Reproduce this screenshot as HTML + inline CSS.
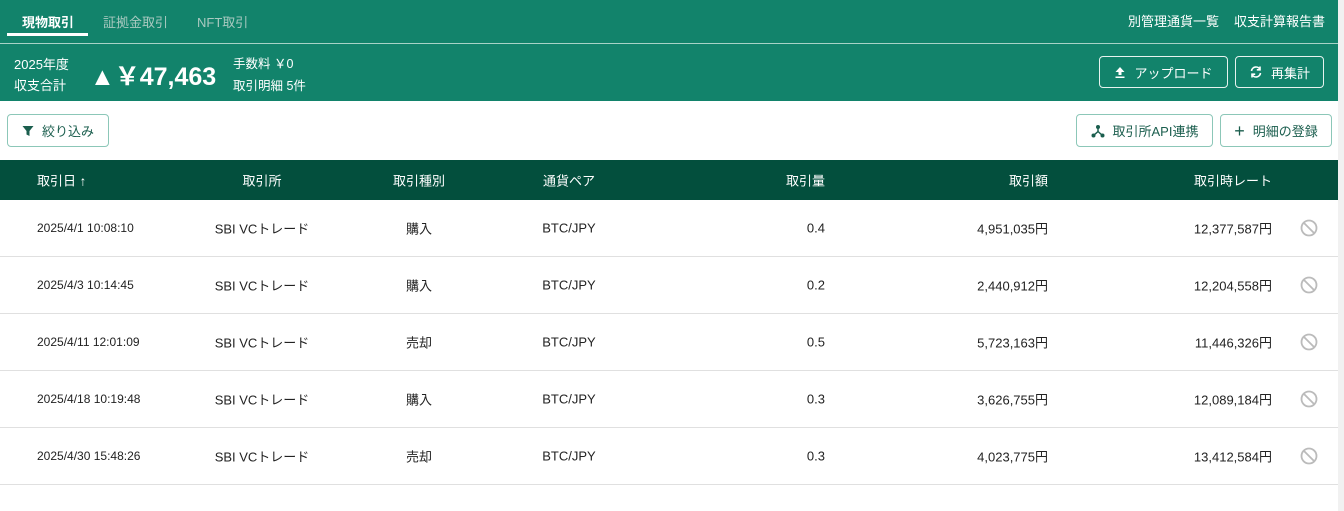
<!DOCTYPE html>
<html><head><meta charset="utf-8"><style>
*{box-sizing:border-box;margin:0;padding:0}
body{width:1344px;height:511px;overflow:hidden;background:#fff;font-family:"Liberation Sans","Noto Sans CJK JP",sans-serif;position:relative;color:#222}
.g{position:absolute;left:0;top:0;width:1338px;height:101px;background:#12836b}
.sb{position:absolute;left:1338px;top:0;width:6px;height:511px;background:#f1f1f1}
.tab{position:absolute;top:12px;font-size:13px;color:#a9c9c0}
.line{position:absolute;left:0;top:43px;width:1338px;height:1px;background:#a8d3c7}
.w{color:#fff;position:absolute}
.btn{position:absolute;border:1px solid #e7f3ef;border-radius:4px;color:#fff;font-size:13px;display:flex;align-items:center;justify-content:center;gap:8px}
.ob{position:absolute;border:1px solid #8cc7b8;border-radius:4px;color:#1b5e4e;font-size:13px;display:flex;align-items:center;justify-content:center;gap:8px}
.hd{position:absolute;left:0;top:160px;width:1338px;height:40px;background:#034f3d;color:#fff;font-size:13px}
.hd span,.r span{position:absolute;top:50%;transform:translateY(-50%);white-space:nowrap}
.r{position:absolute;left:0;width:1338px;height:57px;border-bottom:1px solid #e0e0e0;font-size:13px;color:#222}
.c{transform:translate(-50%,-50%)!important}
svg{display:block}
</style></head><body>
<div class="g"></div><div class="sb"></div>
<div class="tab" style="left:22px;color:#fff;font-weight:bold">現物取引</div>
<div style="position:absolute;left:7px;top:33px;width:81px;height:3px;background:#fff"></div>
<div class="tab" style="left:103px">証拠金取引</div>
<div class="tab" style="left:197px">NFT取引</div>
<div class="w" style="left:1128px;top:11px;font-size:13px">別管理通貨一覧</div>
<div class="w" style="left:1234px;top:11px;font-size:13px">収支計算報告書</div>
<div class="line"></div>
<div class="w" style="left:14px;top:54px;font-size:13px;line-height:21px">2025年度<br>収支合計</div>
<div class="w" style="left:90px;top:57px;font-size:25px;font-weight:bold">▲￥47,463</div>
<div class="w" style="left:233px;top:53px;font-size:12.5px;line-height:22px">手数料 ￥0<br>取引明細 5件</div>
<div class="btn" style="left:1099px;top:56px;width:129px;height:32px"><svg width="12" height="12" viewBox="0 0 12 12"><path d="M6 1L1.5 6H4.5V9H7.5V6H10.5Z M1.5 10.5H10.5V12H1.5Z" fill="#fff"/></svg>アップロード</div>
<div class="btn" style="left:1235px;top:56px;width:89px;height:32px"><svg width="14" height="14" viewBox="0 0 14 14" fill="none" stroke="#fff" stroke-width="1.6"><path d="M2.5 6A4.5 4.5 0 0 1 11 4.5M11.5 8A4.5 4.5 0 0 1 3 9.5"/><path d="M11 1.5V4.8H7.8M3 12.5V9.2H6.2"/></svg>再集計</div>
<div class="ob" style="left:7px;top:114px;width:102px;height:33px"><svg width="12" height="12" viewBox="0 0 12 12"><path d="M0.5 1H11.5L7.5 6V11L4.5 9.5V6Z" fill="#1b5e4e"/></svg>絞り込み</div>
<div class="ob" style="left:1076px;top:114px;width:137px;height:33px"><svg width="14" height="14" viewBox="0 0 14 14"><circle cx="7" cy="3" r="2" fill="#1b5e4e"/><circle cx="2.5" cy="11.5" r="2" fill="#1b5e4e"/><circle cx="11.5" cy="11.5" r="2" fill="#1b5e4e"/><path d="M7 3V7.5L2.5 11.5M7 7.5L11.5 11.5" stroke="#1b5e4e" stroke-width="1.5" fill="none"/></svg>取引所API連携</div>
<div class="ob" style="left:1220px;top:114px;width:112px;height:33px"><span style="font-size:18px;line-height:1">+</span>明細の登録</div>
<div class="hd">
<span style="left:37px">取引日 ↑</span><span class="c" style="left:262px">取引所</span><span class="c" style="left:419px">取引種別</span><span class="c" style="left:569px">通貨ペア</span>
<span style="right:513px">取引量</span><span style="right:290px">取引額</span><span style="right:66px">取引時レート</span></div>
<div id="rows"></div>
<script>
var d=[["2025/4/1 10:08:10","購入","0.4","4,951,035円","12,377,587円"],["2025/4/3 10:14:45","購入","0.2","2,440,912円","12,204,558円"],["2025/4/11 12:01:09","売却","0.5","5,723,163円","11,446,326円"],["2025/4/18 10:19:48","購入","0.3","3,626,755円","12,089,184円"],["2025/4/30 15:48:26","売却","0.3","4,023,775円","13,412,584円"]];
var h="";d.forEach(function(r,i){h+='<div class="r" style="top:'+(200+i*57)+'px"><span style="left:37px;font-size:12px">'+r[0]+'</span><span class="c" style="left:262px">SBI VCトレード</span><span class="c" style="left:419px">'+r[1]+'</span><span class="c" style="left:569px">BTC/JPY</span><span style="right:513px">'+r[2]+'</span><span style="right:290px">'+r[3]+'</span><span style="right:66px">'+r[4]+'</span><span style="left:1300px"><svg width="18" height="18" viewBox="0 0 18 18" fill="none" stroke="#bbb" stroke-width="1.8"><circle cx="9" cy="9" r="7.5"/><path d="M4 4L14 14"/></svg></span></div>'});
document.getElementById("rows").innerHTML=h;
</script>
</body></html>
